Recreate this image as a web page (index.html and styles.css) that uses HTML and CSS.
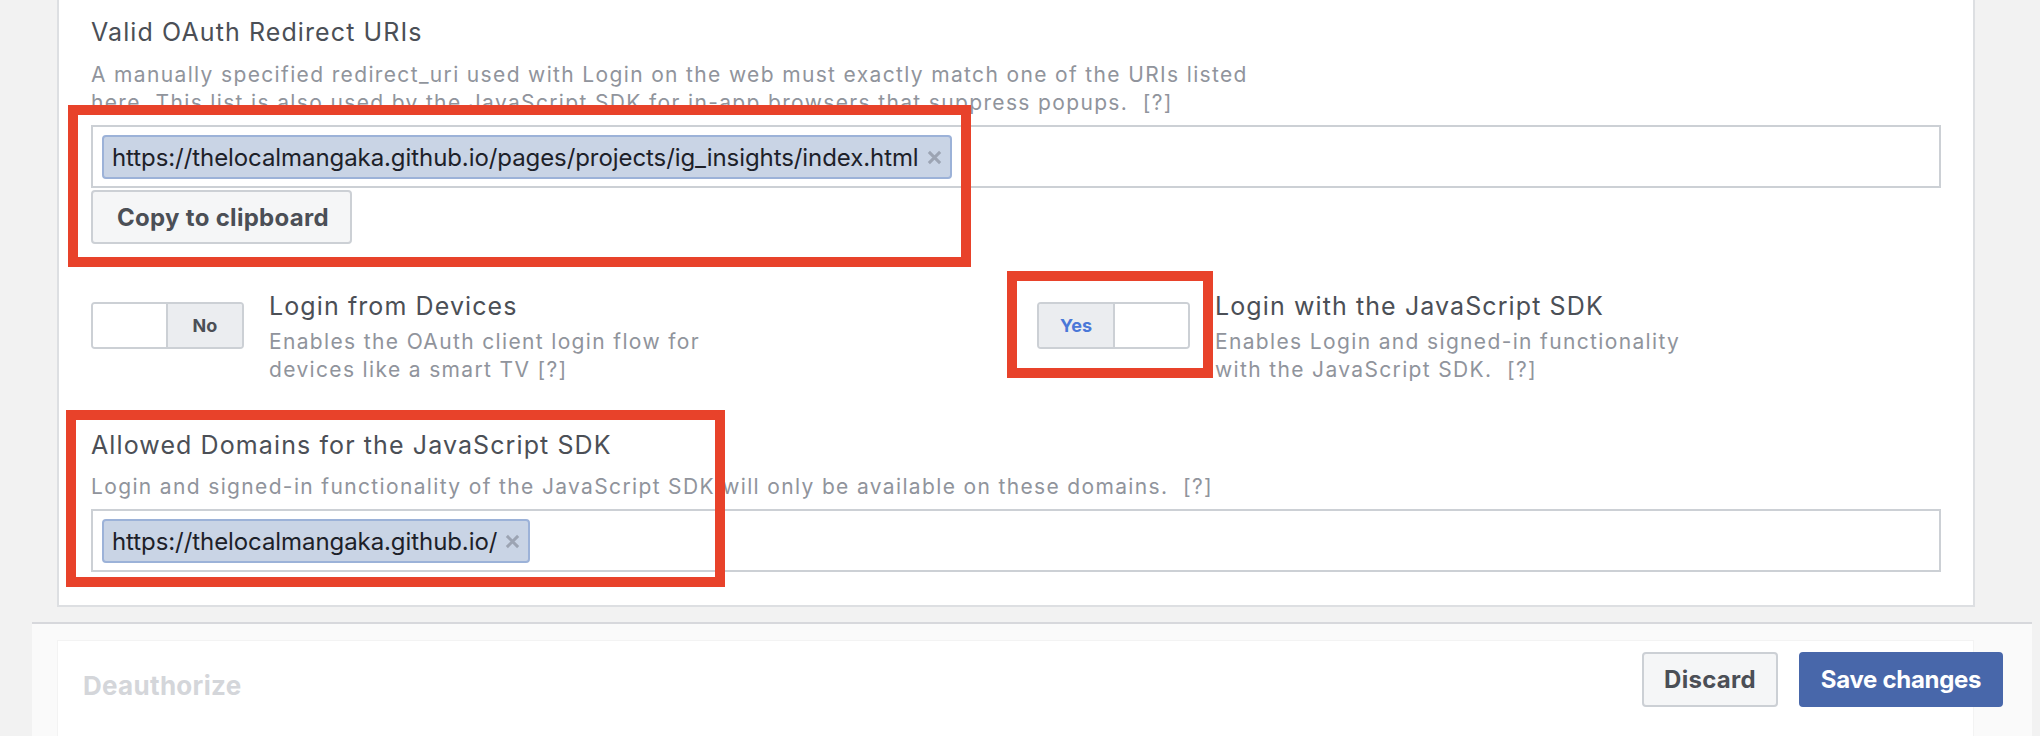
FILE: index.html
```html
<!DOCTYPE html>
<html lang="en">
<head>
<meta charset="utf-8">
<title>Facebook Login Settings</title>
<link rel="stylesheet" href="styles.css">
</head>
<body>
<div class="page">
  <section class="card">
    <div class="field">
      <h3 class="field-title">Valid OAuth Redirect URIs</h3>
      <p class="field-help">A manually specified redirect_uri used with Login on the web must exactly match one of the URIs listed<br>here. This list is also used by the JavaScript SDK for in-app browsers that suppress popups.&nbsp; [?]</p>
      <div class="token-input">
        <span class="token">https://thelocalmangaka.github.io/pages/projects/ig_insights/index.html<svg class="token-x" viewBox="0 0 16 16" aria-hidden="true"><path d="M2 2 L14 14 M14 2 L2 14"/></svg></span>
      </div>
      <button class="btn btn-copy">Copy to clipboard</button>
    </div>

    <div class="toggles">
      <div class="toggle-item">
        <div class="switch">
          <span class="switch-blank"></span>
          <span class="switch-label switch-no">No</span>
        </div>
        <div class="toggle-text">
          <h3 class="field-title">Login from Devices</h3>
          <p class="toggle-help">Enables the OAuth client login flow for<br>devices like a smart TV [?]</p>
        </div>
      </div>
      <div class="toggle-item">
        <div class="switch">
          <span class="switch-label switch-yes">Yes</span>
          <span class="switch-blank"></span>
        </div>
        <div class="toggle-text">
          <h3 class="field-title">Login with the JavaScript SDK</h3>
          <p class="toggle-help">Enables Login and signed-in functionality<br>with the JavaScript SDK.&nbsp; [?]</p>
        </div>
      </div>
    </div>

    <div class="field field-domains">
      <h3 class="field-title">Allowed Domains for the JavaScript SDK</h3>
      <p class="field-help help-single">Login and signed-in functionality of the JavaScript SDK will only be available on these domains.&nbsp; [?]</p>
      <div class="token-input">
        <span class="token">https://thelocalmangaka.github.io/<svg class="token-x" viewBox="0 0 16 16" aria-hidden="true"><path d="M2 2 L14 14 M14 2 L2 14"/></svg></span>
      </div>
    </div>
  </section>

  <footer class="footer">
    <div class="footer-inner">
      <span class="deauth">Deauthorize</span>
      <div class="actions">
        <button class="btn btn-discard">Discard</button>
        <button class="btn btn-save">Save changes</button>
      </div>
    </div>
  </footer>

  <div class="mark mark-uris"></div>
  <div class="mark mark-sdk"></div>
  <div class="mark mark-domains"></div>
</div>
</body>
</html>
```

FILE: styles.css
```css
* { box-sizing: border-box; }

html, body {
  margin: 0;
  padding: 0;
  background: #f2f2f2;
}

body {
  font-family: Inter, "Liberation Sans", Arial, sans-serif;
  color: #4b4f56;
  width: 2040px;
  height: 736px;
  overflow: hidden;
}

.page {
  position: relative;
}

/* ---------- card ---------- */
.card {
  margin-left: 57px;
  width: 1918px;
  background: #fff;
  border: 2px solid #dddfe2;
  border-top: 0;
  padding: 17px 32px 33px 32px;
}

.field-title {
  margin: 0;
  font-size: 25px;
  line-height: 30px;
  font-weight: 400;
  letter-spacing: 1.1px;
  color: #4b4f56;
}

.field-help {
  margin: 14px 0 8px;
  font-size: 21px;
  line-height: 28px;
  letter-spacing: 1.35px;
  color: #90949c;
}

.help-single {
  margin-top: 13px;
}

.token-input {
  display: flex;
  align-items: flex-start;
  height: 63px;
  border: 2px solid #ccd0d5;
  padding: 8px 9px 7px;
  background: #fff;
}

.token {
  display: inline-flex;
  align-items: center;
  height: 44px;
  padding: 0 8px 0 8px;
  border: 2px solid #9cb2d8;
  border-radius: 4px;
  background: #c9d4e5;
  color: #1d2129;
  font-size: 24px;
  letter-spacing: -0.08px;
  white-space: nowrap;
}

.token-x {
  width: 15px;
  height: 15px;
  margin-left: 8px;
  fill: none;
  stroke: #9ca4b3;
  stroke-width: 3.2;
}

.btn {
  font-family: inherit;
  font-weight: 700;
  cursor: pointer;
  border-radius: 4px;
  border: 2px solid #ccd0d5;
  background: #f5f6f7;
  color: #4b4f56;
  padding: 0;
}

.btn-copy {
  display: block;
  margin-top: 2px;
  width: 261px;
  height: 54px;
  font-size: 24px;
  letter-spacing: 0.3px;
  text-align: left;
  padding-left: 24px;
}

/* ---------- toggles ---------- */
.toggles {
  display: grid;
  grid-template-columns: 946px 1fr;
  margin-top: 47px;
}

.toggle-item {
  display: flex;
  align-items: flex-start;
  gap: 25px;
}

.switch {
  display: flex;
  width: 153px;
  height: 47px;
  margin-top: 11px;
  border: 2px solid #ccd0d5;
  border-radius: 4px;
  overflow: hidden;
  flex-shrink: 0;
}

.switch-blank {
  flex: 1;
  background: #fff;
}

.switch-label {
  width: 76px;
  display: flex;
  align-items: center;
  justify-content: center;
  background: #ebedf0;
  font-size: 18px;
  font-weight: 700;
}

.switch-no {
  border-left: 2px solid #ccd0d5;
  color: #4b4f56;
}

.switch-yes {
  border-right: 2px solid #ccd0d5;
  color: #4a78d8;
}

.toggle-help {
  margin: 7px 0 0;
  font-size: 21px;
  line-height: 28px;
  letter-spacing: 1.35px;
  color: #90949c;
}

.field-domains {
  margin-top: 46px;
}

/* ---------- footer ---------- */
.footer {
  margin-top: 15px;
  margin-left: 32px;
  width: 2000px;
  height: 114px;
  background: #fafafa;
  border-top: 2px solid #d7d8dc;
  padding-top: 16px;
}

.footer-inner {
  display: flex;
  justify-content: space-between;
  align-items: flex-start;
  margin-left: 25px;
  margin-right: 58px;
  height: 100%;
  background: #fff;
  border: 1px solid #f3f3f3;
  border-bottom: 0;
  padding: 11px 0 0 25px;
}

.deauth {
  margin-top: 19px;
  font-size: 26px;
  line-height: 30px;
  font-weight: 700;
  letter-spacing: 0.3px;
  color: #d4d6da;
}

.actions {
  display: flex;
  gap: 21px;
  margin-right: -30px;
}

.btn-discard {
  width: 136px;
  height: 55px;
  font-size: 24px;
  letter-spacing: 0.3px;
}

.btn-save {
  width: 204px;
  height: 55px;
  font-size: 24px;
  letter-spacing: -0.3px;
  background: #4867aa;
  border-color: #4867aa;
  color: #fff;
}

/* ---------- red annotation boxes ---------- */
.mark {
  position: absolute;
  border: 10px solid #e8422a;
  pointer-events: none;
}

.mark-uris {
  left: 68px;
  top: 105px;
  width: 903px;
  height: 162px;
}

.mark-sdk {
  left: 1007px;
  top: 271px;
  width: 206px;
  height: 107px;
}

.mark-domains {
  left: 66px;
  top: 410px;
  width: 659px;
  height: 177px;
}
```
